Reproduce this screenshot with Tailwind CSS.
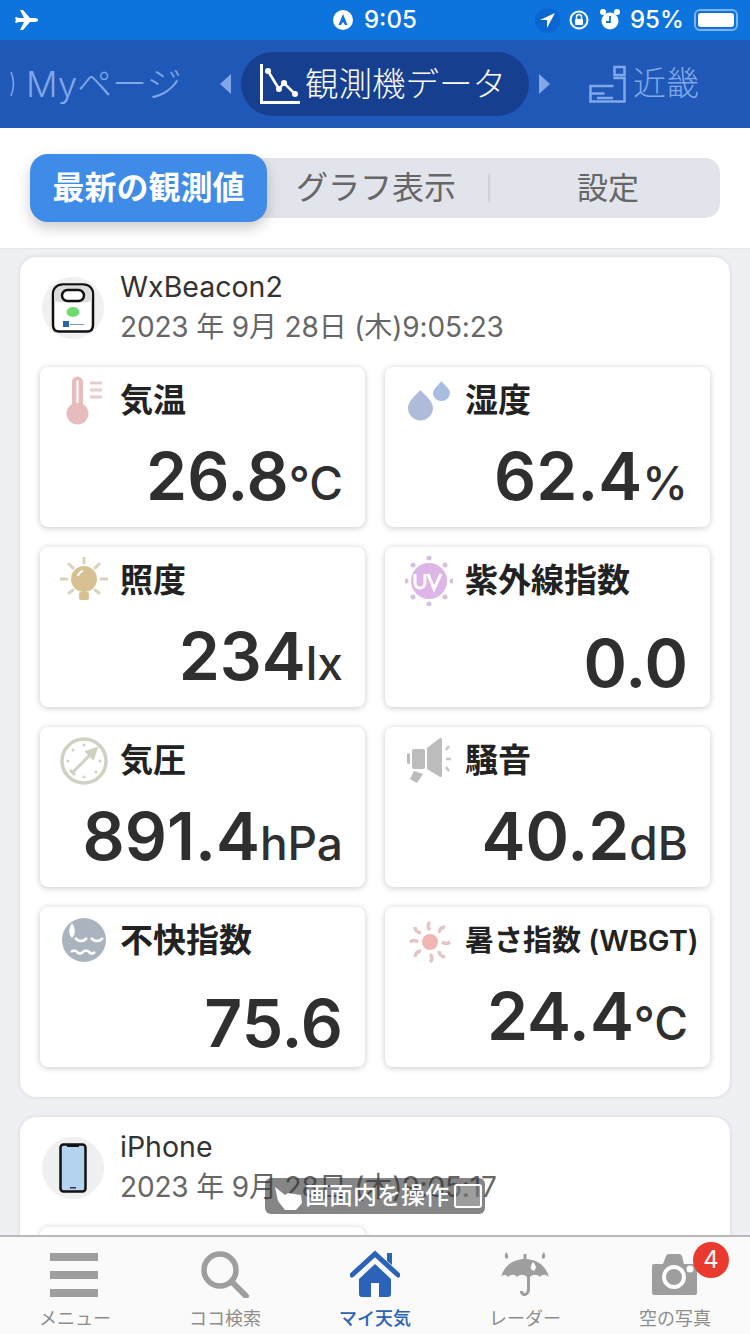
<!DOCTYPE html>
<html lang="ja">
<head>
<meta charset="utf-8">
<script src="https://cdn.jsdelivr.net/npm/@tailwindcss/browser@4"></script>
<title>観測機データ</title>
</head>
<body class="m-0">
<div class="relative w-[750px] h-[1334px] overflow-hidden flex flex-col bg-[#eef0f4] text-[#2f2f2f] font-['Inter','Noto_Sans_CJK_JP',sans-serif]">

  <!-- status bar -->
  <div class="h-[40px] shrink-0 bg-[#0e74dd] flex items-center text-white text-[24px] font-medium relative">
    <svg class="absolute left-[14px] top-[9px]" width="24" height="22" viewBox="0 0 24 22"><path fill="#fff" d="M1 9l1-1 3 1h5L6 1h3l7 8h5c2 0 3 1 3 2s-1 2-3 2h-5l-7 8H6l4-8H5l-3 1-1-1 1-2z"/></svg>
    <div class="absolute left-[333px] top-[0px] h-[40px] flex items-center gap-[11px]">
      <svg width="20" height="20" viewBox="0 0 20 20"><circle cx="10" cy="10" r="10" fill="#fff"/><path d="M10 4l4.500 11h-2.400L10 12l-2.100 3H5.500z" fill="#0e74dd"/></svg>
      <span>9:05</span>
    </div>
    <div class="absolute left-[535px] top-[0px] h-[40px] flex items-center">
      <div class="w-[25px] h-[25px] rounded-full bg-[#0b66d2] flex items-center justify-center"><svg width="17" height="17" viewBox="0 0 17 17"><path fill="#fff" d="M16 1L1 8h7v8z"/></svg></div>
      <svg class="ml-[8px]" width="22" height="22" viewBox="0 0 22 22"><circle cx="11" cy="11" r="8.500" fill="none" stroke="#fff" stroke-width="2"/><rect x="7" y="10" width="8" height="6" rx="1" fill="#fff"/><path d="M8.500 10V8a2.500 2.500 0 015 0v2" fill="none" stroke="#fff" stroke-width="1.500"/></svg>
      <svg class="ml-[9px]" width="22" height="24" viewBox="0 0 22 24"><circle cx="11" cy="13" r="8.500" fill="#fff"/><path d="M11 8v6h-4" fill="none" stroke="#0e74dd" stroke-width="1.800"/><circle cx="4" cy="4" r="3" fill="#fff"/><circle cx="18" cy="4" r="3" fill="#fff"/></svg>
      <span class="ml-[9px]">95%</span>
      <div class="ml-[10px] w-[44px] h-[22px] rounded-[6px] border-2 border-[#7fb2ee] p-[2px]"><div class="w-[36px] h-full bg-white rounded-[3px]"></div></div>
    </div>
  </div>

  <!-- navigation -->
  <div class="h-[88px] shrink-0 bg-[#2058b8] flex items-center text-[#81a7e6] text-[34px]">
    <div class="w-[220px] pl-[10px] flex items-center gap-[9px] whitespace-nowrap font-light"><svg width="7" height="26" viewBox="0 0 7 26" class="shrink-0"><path d="M1 1q5 12 0 24" fill="none" stroke="#81a7e6" stroke-width="1.500"/></svg><span class="text-[35px]">Myページ</span></div>
    <svg width="12" height="20" viewBox="0 0 12 20" class="shrink-0"><path fill="#81a7e6" d="M11 0v20L0 10z"/></svg>
    <div class="ml-[9px] w-[288px] h-[64px] rounded-full bg-[#173f8f] flex items-center pl-[19px] gap-[5px] text-white">
      <svg width="40" height="40" viewBox="0 0 40 40" class="shrink-0"><path d="M1.500 0v38.500H40" fill="none" stroke="#fff" stroke-width="3"/><path d="M8 7l11 18 5-6 11 11" fill="none" stroke="#fff" stroke-width="2.500"/><circle cx="8" cy="7" r="3" fill="#fff"/><circle cx="19" cy="25" r="3" fill="#fff"/><circle cx="24" cy="19" r="3" fill="#fff"/><circle cx="35" cy="30" r="3" fill="#fff"/></svg>
      <span class="whitespace-nowrap font-light text-[33.500px]">観測機データ</span>
    </div>
    <svg width="12" height="20" viewBox="0 0 12 20" class="shrink-0 ml-[9px]"><path fill="#81a7e6" d="M1 0v20l11-10z"/></svg>
    <svg width="38" height="38" viewBox="0 0 38 38" class="shrink-0 ml-[39px]"><path d="M25.500 2h10v8h-10zM24.500 13h11v23.500h-34V21h23M1.500 28.500h14M8 33h16" fill="none" stroke="#81a7e6" stroke-width="2.500"/></svg>
    <span class="ml-[6px] whitespace-nowrap font-light text-[33px]">近畿</span>
  </div>

  <!-- segmented control -->
  <div class="h-[120px] shrink-0 bg-white flex items-center px-[30px]">
    <div class="w-[690px] h-[60px] rounded-[15px] bg-[#e1e4ea] flex items-center text-[32px] text-[#666666]">
      <div class="w-[237px] h-[68px] rounded-[18px] bg-[#3f8ce8] text-white font-bold flex items-center justify-center whitespace-nowrap shadow-[0_6px_14px_rgba(0,0,0,0.2)]">最新の観測値</div>
      <div class="w-[223px] h-[28px] border-r-2 border-[#cfd2d8] flex items-center pl-[29px] whitespace-nowrap">グラフ表示</div>
      <div class="flex-1 text-center pl-[6px] text-[31px]">設定</div>
    </div>
  </div>

  <!-- scrolled content -->
  <div class="flex-1 min-h-0 overflow-hidden pt-[8px] px-[20px] flex flex-col gap-[20px] border-t border-[#e4e6ea]">
    <!-- card 1 -->
    <section class="shrink-0 h-[840px] rounded-[16px] bg-white shadow-[0_0_4px_rgba(0,0,0,0.12)] pt-[10px] px-[20px]">
      <header class="h-[100px] flex items-start">
        <div class="w-[62px] h-[62px] ml-[2px] mt-[10px] rounded-full bg-[#f1f0f0] flex items-center justify-center shrink-0">
          <svg width="44" height="50" viewBox="0 0 44 50"><path d="M12 1.500h20c6 0 10 4 10 10V42c0 4-2 6.500-6 6.500H8c-4 0-6-2.500-6-6.500V11.500c0-6 4-10 10-10z" fill="#fff" stroke="#111" stroke-width="2.500"/><path d="M3 11c0-5 4-8.500 9-8.500h20c5 0 9 3.500 9 8.500v7c-8 2-30 2-38 0z" fill="#dcdcdc"/><rect x="11" y="7" width="22" height="11" rx="5.500" fill="#fff" stroke="#111" stroke-width="2.500"/><ellipse cx="22" cy="29" rx="6.500" ry="5" fill="#6fdc6f"/><rect x="12" y="38" width="6" height="6" fill="#2a66a8"/><rect x="19" y="41" width="14" height="1" fill="#7a9ac0"/></svg>
        </div>
        <div class="ml-[16px] min-w-0">
          <div class="text-[28.500px] leading-[40px] text-[#333333] whitespace-nowrap">WxBeacon2</div>
          <div class="text-[28px] leading-[40px] text-[#666666] whitespace-nowrap tracking-[-0.15px]">2023 年 9月 28日 (木)9:05:23</div>
        </div>
      </header>

      <div class="grid grid-cols-2 gap-[20px]">
        <article class="h-[160px] rounded-[8px] bg-white shadow-[0_1px_6px_rgba(0,0,0,0.22)] flex flex-col px-[22px] pb-[9px]">
          <div class="h-[68px] flex items-center -ml-[2px]">
            <svg width="48" height="50" viewBox="0 0 48 50" class="shrink-0"><path d="M12 6a5.500 5.500 0 0111 0v22a11 11 0 11-11 0z" fill="#e6bcbc"/><path d="M16.500 5a1 1 0 012 0v22h-2z" fill="#fff"/><path d="M30 7h12M30 14h12M30 21h12" stroke="#e8cccc" stroke-width="3"/></svg>
            <h3 class="ml-[13px] -translate-x-px text-[33px] font-bold text-[#222222] whitespace-nowrap">気温</h3>
          </div>
          <div class="mt-auto text-right text-[66px] leading-[70px] font-semibold whitespace-nowrap">26.8<span class="text-[46px] font-medium">°C</span></div>
        </article>
        <article class="h-[160px] rounded-[8px] bg-white shadow-[0_1px_6px_rgba(0,0,0,0.22)] flex flex-col px-[22px] pb-[9px]">
          <div class="h-[68px] flex items-center -ml-[2px]">
            <svg width="48" height="50" viewBox="0 0 48 50" class="shrink-0"><path d="M15.500 14c4 5 12.500 11 12.500 18a12.500 12.500 0 01-25 0c0-7 8-13 12.500-18z" fill="#aebbdb"/><path d="M36.500 5c3 4 8.500 8 8.500 12a8.500 8 0 01-17 0c0-4 5.500-8 8.500-12z" fill="#a8bddf"/></svg>
            <h3 class="ml-[13px] -translate-x-px text-[33px] font-bold text-[#222222] whitespace-nowrap">湿度</h3>
          </div>
          <div class="mt-auto text-right text-[66px] leading-[70px] font-semibold whitespace-nowrap">62.4<span class="text-[46px] font-medium">%</span></div>
        </article>
        <article class="h-[160px] rounded-[8px] bg-white shadow-[0_1px_6px_rgba(0,0,0,0.22)] flex flex-col px-[22px] pb-[9px]">
          <div class="h-[68px] flex items-center -ml-[2px]">
            <svg width="48" height="50" viewBox="0 0 48 50" class="shrink-0"><circle cx="24" cy="23" r="13" fill="#d7c193"/><rect x="19" y="36" width="10" height="8" rx="2" fill="#d7c193"/><path d="M18 20q1-4 5-5" stroke="#fff" stroke-width="2" fill="none"/><path d="M24 2v5M9 8l4 4M39 8l-4 4M1 23h6M41 23h6M9 37l4-3M39 37l-4-3" stroke="#d9d2bd" stroke-width="3" stroke-linecap="round"/></svg>
            <h3 class="ml-[13px] -translate-x-px text-[33px] font-bold text-[#222222] whitespace-nowrap">照度</h3>
          </div>
          <div class="mt-auto text-right text-[66px] leading-[70px] font-semibold whitespace-nowrap">234<span class="text-[46px] font-medium">lx</span></div>
        </article>
        <article class="h-[160px] rounded-[8px] bg-white shadow-[0_1px_6px_rgba(0,0,0,0.22)] flex flex-col px-[22px] pb-[9px]">
          <div class="h-[68px] flex items-center -ml-[2px]">
            <svg width="48" height="50" viewBox="0 0 48 50" class="shrink-0"><circle cx="24" cy="25" r="18" fill="#ddb5e6"/><g fill="#d6c1dc"><circle cx="24" cy="2" r="2.500"/><circle cx="24" cy="48" r="2.500"/><circle cx="1" cy="25" r="2.500"/><circle cx="47" cy="25" r="2.500"/><circle cx="8" cy="9" r="2.500"/><circle cx="40" cy="9" r="2.500"/><circle cx="8" cy="41" r="2.500"/><circle cx="40" cy="41" r="2.500"/></g><path d="M10 18v9a5 5 0 0010 0v-9M23 18l6 15 7-15" fill="none" stroke="#fff" stroke-width="3"/></svg>
            <h3 class="ml-[13px] -translate-x-px text-[33px] font-bold text-[#222222] whitespace-nowrap">紫外線指数</h3>
          </div>
          <div class="mt-auto text-right text-[66px] leading-[70px] font-semibold whitespace-nowrap">0.0</div>
        </article>
        <article class="h-[160px] rounded-[8px] bg-white shadow-[0_1px_6px_rgba(0,0,0,0.22)] flex flex-col px-[22px] pb-[9px]">
          <div class="h-[68px] flex items-center -ml-[2px]">
            <svg width="48" height="50" viewBox="0 0 48 50" class="shrink-0"><circle cx="24" cy="25" r="22" fill="none" stroke="#cfd2c3" stroke-width="3.500"/><path d="M12 37l22-22M36 13l-9 3 6 6zM10 34l5 5" stroke="#cfd2c3" stroke-width="3" fill="#cfd2c3"/><g fill="#cfd2c3"><circle cx="24" cy="9" r="1.500"/><circle cx="13" cy="14" r="1.500"/><circle cx="8" cy="25" r="1.500"/><circle cx="40" cy="25" r="1.500"/><circle cx="36" cy="36" r="1.500"/><circle cx="24" cy="41" r="1.500"/></g></svg>
            <h3 class="ml-[13px] -translate-x-px text-[33px] font-bold text-[#222222] whitespace-nowrap">気圧</h3>
          </div>
          <div class="mt-auto text-right text-[66px] leading-[70px] font-semibold whitespace-nowrap">891.4<span class="text-[46px] font-medium">hPa</span></div>
        </article>
        <article class="h-[160px] rounded-[8px] bg-white shadow-[0_1px_6px_rgba(0,0,0,0.22)] flex flex-col px-[22px] pb-[9px]">
          <div class="h-[68px] flex items-center -ml-[2px]">
            <svg width="48" height="50" viewBox="0 0 48 50" class="shrink-0"><rect x="2" y="17" width="3" height="11" rx="1.500" fill="#bcbcbc"/><rect x="7" y="13" width="13" height="20" rx="2" fill="#bcbcbc"/><path d="M22 12l13-10a2 2 0 012 1v37a2 2 0 01-2 1L22 33z" fill="#bcbcbc"/><path d="M9 35l9 3-6 9-7-4z" fill="#bcbcbc"/><path d="M41 14l3-4M41 23h5M41 31l3 4" stroke="#c6c6c6" stroke-width="2.500"/></svg>
            <h3 class="ml-[13px] -translate-x-px text-[33px] font-bold text-[#222222] whitespace-nowrap">騒音</h3>
          </div>
          <div class="mt-auto text-right text-[66px] leading-[70px] font-semibold whitespace-nowrap">40.2<span class="text-[46px] font-medium">dB</span></div>
        </article>
        <article class="h-[160px] rounded-[8px] bg-white shadow-[0_1px_6px_rgba(0,0,0,0.22)] flex flex-col px-[22px] pb-[9px]">
          <div class="h-[68px] flex items-center -ml-[2px]">
            <svg width="48" height="50" viewBox="0 0 48 50" class="shrink-0"><circle cx="24" cy="24" r="22" fill="#a9b4be"/><path d="M12 7q6 9 0 15q-6-6 0-15z" fill="#fff"/><path d="M15 22q6 6 12 0M31 22q6 6 12 0" fill="none" stroke="#fff" stroke-width="2.500"/><path d="M11 36q3-3 6 0t6 0 6 0 6 0" fill="none" stroke="#fff" stroke-width="2.500"/></svg>
            <h3 class="ml-[13px] -translate-x-px text-[33px] font-bold text-[#222222] whitespace-nowrap">不快指数</h3>
          </div>
          <div class="mt-auto text-right text-[66px] leading-[70px] font-semibold whitespace-nowrap">75.6</div>
        </article>
        <article class="h-[160px] rounded-[8px] bg-white shadow-[0_1px_6px_rgba(0,0,0,0.22)] flex flex-col px-[22px] pb-[9px]">
          <div class="h-[68px] flex items-center -ml-[2px]">
            <svg width="48" height="50" viewBox="0 0 48 50" class="shrink-0"><circle cx="25" cy="26" r="8" fill="#f0b6b2"/><path d="M25 6q-4 4 0 8M25 38q4 4 0 8M5 26q4-3 8 0M37 26q4 3 8 0M10 11q0 5 6 6M34 35q0 5 6 6M40 11q-5 0-6 6M16 35q-5 0-6 6" fill="none" stroke="#e2c6c6" stroke-width="3.500"/></svg>
            <h3 class="ml-[13px] -translate-x-px text-[29px] font-semibold text-[#222222] whitespace-nowrap">暑さ指数 (WBGT)</h3>
          </div>
          <div class="mt-auto text-right text-[66px] leading-[70px] font-semibold whitespace-nowrap">24.4<span class="text-[46px] font-medium">°C</span></div>
        </article>
      </div>
    </section>

    <!-- card 2 -->
    <section class="shrink-0 rounded-[16px] bg-white shadow-[0_0_4px_rgba(0,0,0,0.12)] pt-[10px] px-[20px] h-[300px]">
      <header class="h-[100px] flex items-start">
        <div class="w-[62px] h-[62px] ml-[2px] mt-[10px] rounded-full bg-[#f1f0f0] flex items-center justify-center shrink-0">
          <svg width="28" height="50" viewBox="0 0 28 50"><rect x="1.500" y="1.500" width="25" height="47" rx="3" fill="#b4d3ee" stroke="#111" stroke-width="2.500"/><rect x="8" y="1" width="12" height="3" fill="#111"/><rect x="11" y="44" width="6" height="1.500" fill="#335"/></svg>
        </div>
        <div class="ml-[16px] min-w-0">
          <div class="text-[28.500px] leading-[40px] text-[#333333] whitespace-nowrap">iPhone</div>
          <div class="text-[28px] leading-[40px] text-[#666666] whitespace-nowrap tracking-[-0.15px]">2023 年 9月 28日 (木)9:05:17</div>
        </div>
      </header>
      <div class="w-[325px] h-[160px] rounded-[8px] bg-white shadow-[0_1px_6px_rgba(0,0,0,0.22)]"></div>
    </section>
  </div>

  <!-- tab bar -->
  <nav class="h-[99px] shrink-0 bg-[#fafafa] border-t-2 border-[#b9b9b9] relative z-10 grid grid-cols-5 text-[18px] text-[#8d8d8d]">
    <a class="flex flex-col items-center pt-[13px]">
      <svg width="50" height="48" viewBox="0 0 50 48"><path d="M0 3h48v8H0zM0 21h48v8H0zM0 39h48v8H0z" fill="#9e9e9e"/></svg>
      <span class="mt-[9px] leading-[24px] whitespace-nowrap">メニュー</span>
    </a>
    <a class="flex flex-col items-center pt-[13px]">
      <svg width="50" height="48" viewBox="0 0 50 48"><circle cx="20" cy="20" r="16" fill="none" stroke="#9e9e9e" stroke-width="5.500"/><path d="M32 32l14 14" stroke="#9e9e9e" stroke-width="6" stroke-linecap="round"/></svg>
      <span class="mt-[9px] leading-[24px] whitespace-nowrap">ココ検索</span>
    </a>
    <a class="flex flex-col items-center pt-[13px] text-[#2b63b8] font-medium">
      <svg width="50" height="48" viewBox="0 0 50 48"><path d="M2 25L25 4l23 21" fill="none" stroke="#2b63b8" stroke-width="5" stroke-linecap="round"/><path d="M37 3h5v12l-5-4z" fill="#2b63b8"/><path d="M9 29L25 14l16 15v15a3 3 0 01-3 3h-9V33h-8v14H12a3 3 0 01-3-3z" fill="#2b63b8"/></svg>
      <span class="mt-[9px] leading-[24px] whitespace-nowrap">マイ天気</span>
    </a>
    <a class="flex flex-col items-center pt-[13px]">
      <svg width="50" height="48" viewBox="0 0 50 48"><path d="M1 27C4 16 13 9 25 9s21 7 24 18c-3-3-7-3-9 0-3-3-7-3-10 0v12c0 9-10 9-10 2h3c0 3 4 3 4-2V27c-3-3-7-3-10 0-2-3-6-3-9 0-2-3-5-3-7 0z" fill="#9e9e9e"/><path d="M23.500 4h3v6h-3z" fill="#9e9e9e"/><path d="M6 2q4 4 1 7q-4-1-1-7zM44 2q-4 4-1 7q4-1 1-7z" fill="#9e9e9e"/><path d="M33 12q5 5 1 9q-6-2-1-9z" fill="#fff"/></svg>
      <span class="mt-[9px] leading-[24px] whitespace-nowrap">レーダー</span>
    </a>
    <a class="flex flex-col items-center pt-[13px] relative">
      <svg width="50" height="48" viewBox="0 0 50 48"><path d="M4 14h9l3-8q1-2 3-2h10q2 0 3 2l2 8h11a2 2 0 012 2v27a2 2 0 01-2 2H4a2 2 0 01-2-2V16a2 2 0 012-2z" fill="#9e9e9e"/><circle cx="24" cy="27" r="10" fill="#9e9e9e" stroke="#fff" stroke-width="4"/><circle cx="40" cy="19" r="3.500" fill="#fff"/></svg>
      <span class="mt-[9px] leading-[24px] whitespace-nowrap">空の写真</span>
      <span class="absolute left-[93px] top-[5px] w-[36px] h-[36px] rounded-full bg-[#ea3a2e] text-white text-[24px] flex items-center justify-center">4</span>
    </a>
  </nav>

  <!-- accessibility overlay pill -->
  <div class="absolute left-[265px] top-[1178px] w-[220px] h-[36px] rounded-[6px] bg-[#333333]/60 flex items-center pl-[8px] gap-[2px] text-white text-[24px] font-medium z-20">
    <svg width="30" height="30" viewBox="0 0 30 30" class="shrink-0"><path d="M2 6l10 8 3-2 13 2 1 8-6 7H12L5 20z" fill="#fff"/></svg>
    <span class="whitespace-nowrap">画面内を操作</span>
    <span class="ml-[3px] w-[28px] h-[24px] border-2 border-white rounded-[3px] bg-white/20"></span>
  </div>
</div>
</body>
</html>
